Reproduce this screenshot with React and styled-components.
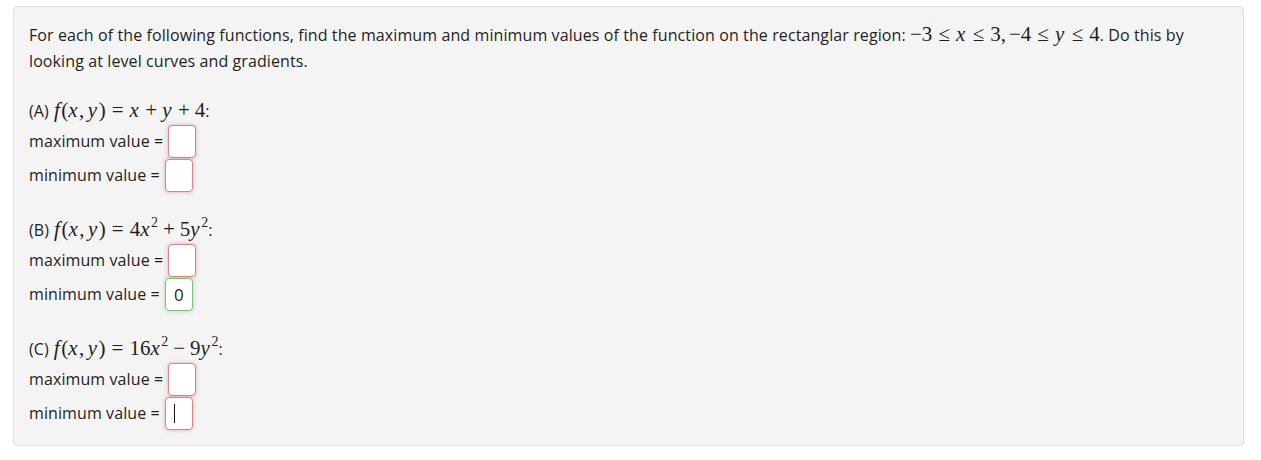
import styled, { createGlobalStyle } from "styled-components";

const GlobalStyle = createGlobalStyle`
  body {
    margin: 0;
    background: #ffffff;
    font-family: "Open Sans", "Noto Sans", sans-serif;
  }
`

const Page = styled.div`
  padding: 6px 17px 15px 13px;
`

const Card = styled.div`
  background: #f4f4f4;
  border: 1px solid #e0e0e0;
  border-radius: 4px;
  padding: 15px 15px 15px 15px;
  color: #1f1f1f;
  font-size: 16px;
  letter-spacing: 0.1px;
`

const Prompt = styled.div`
  line-height: 26px;
  max-width: 1195px;
`

const Section = styled.div`
  margin-top: 25px;
  ${Prompt} + & {
    margin-top: 24px;
  }
`

const Title = styled.div`
  line-height: 26px;
  height: 26px;
  white-space: nowrap;
`

const Row = styled.div`
  display: flex;
  align-items: center;
  height: 34px;
`

const Label = styled.span`
  margin-right: 5px;
`

const AnswerBox = styled.div`
  box-sizing: border-box;
  width: 28px;
  height: 33px;
  background: #ffffff;
  border: 1px solid ${p => p.$ok ? "#7fbf7f" : "#d98585"};
  border-radius: 4px;
  box-shadow: 0 0 4px ${p => p.$ok ? "rgba(90, 170, 90, 0.45)" : "rgba(210, 90, 90, 0.45)"};
  display: flex;
  align-items: center;
  justify-content: center;
  font-size: 17px;
`

const Caret = styled.span`
  display: block;
  width: 1px;
  height: 19px;
  background: #111;
  margin-right: 9px;
`

const MathText = styled.span`
  font-family: "Liberation Serif", "Times New Roman", serif;
  font-size: 21px;
  line-height: 18px;
  letter-spacing: 0;
  white-space: nowrap;
  margin-left: ${p => p.$ml || 0}px;
`

const V = styled.i`
  font-style: italic;
  margin-right: 1.5px;
`

const Op = styled.span`
  margin: 0 ${p => p.$w || 5}px;
`

const Comma = styled.span`
  margin-right: ${p => p.$w || 3.5}px;
`

const Sup = styled.sup`
  font-size: 14px;
  vertical-align: 9px;
  line-height: 0;
`

function Fxy() {
  return (
    <>
      <V>f</V>(<V>x</V><Comma>,</Comma><V>y</V>)<Op $w={6}>=</Op>
    </>
  )
}

function Answer({ label, value, ok, caret }) {
  return (
    <Row>
      <Label>{label} =</Label>
      <AnswerBox $ok={ok}>
        {caret ? <Caret /> : value}
      </AnswerBox>
    </Row>
  )
}

const parts = [
  {
    key: "A",
    formula: (
      <>
        <Fxy /><V>x</V><Op>+</Op><V>y</V><Op>+</Op>4
      </>
    ),
    answers: [{ label: "maximum value" }, { label: "minimum value" }],
  },
  {
    key: "B",
    formula: (
      <>
        <Fxy />4<V>x</V><Sup>2</Sup><Op>+</Op>5<V>y</V><Sup>2</Sup>
      </>
    ),
    answers: [{ label: "maximum value" }, { label: "minimum value", value: "0", ok: true }],
  },
  {
    key: "C",
    formula: (
      <>
        <Fxy />16<V>x</V><Sup>2</Sup><Op>−</Op>9<V>y</V><Sup>2</Sup>
      </>
    ),
    answers: [{ label: "maximum value" }, { label: "minimum value", caret: true }],
  },
]

export default function App() {
  return (
    <Page>
      <GlobalStyle />
      <Card>
        <Prompt>
          For each of the following functions, find the maximum and minimum values of the function on the rectanglar region:{" "}
          <MathText>
            −3<Op $w={6}>≤</Op><V>x</V><Op $w={6}>≤</Op>3<Comma $w={3}>,</Comma>−4<Op $w={6}>≤</Op><V>y</V><Op $w={6}>≤</Op>4
          </MathText>. Do this by looking at level curves and gradients.
        </Prompt>
        {parts.map(part => (
          <Section key={part.key}>
            <Title>
              <span>({part.key})</span>
              <MathText $ml={5}>{part.formula}</MathText>:
            </Title>
            {part.answers.map((a, i) => (
              <Answer key={i} label={a.label} value={a.value} ok={a.ok} caret={a.caret} />
            ))}
          </Section>
        ))}
      </Card>
    </Page>
  )
}
